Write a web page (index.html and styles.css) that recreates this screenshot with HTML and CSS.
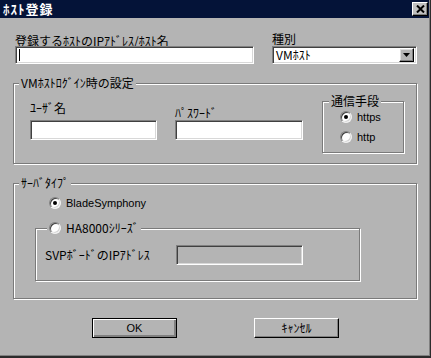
FILE: index.html
```html
<!DOCTYPE html>
<html lang="ja">
<head>
<meta charset="utf-8">
<title>ﾎｽﾄ登録</title>
<link rel="stylesheet" href="styles.css">
</head>
<body>
<div class="window">
  <div class="titlebar">
    <span class="title">ﾎｽﾄ登録</span>
    <span class="close"><svg width="9" height="8" viewBox="0 0 9 8"><path d="M1 0.5L8 7.5M8 0.5L1 7.5" stroke="#000" stroke-width="2" fill="none"/></svg></span>
  </div>
  <div class="content">
    <div class="row1">
      <div class="field host">
        <div class="lbl">登録するﾎｽﾄのIPｱﾄﾞﾚｽ/ﾎｽﾄ名</div>
        <div class="input host-input"><span class="caret"></span></div>
      </div>
      <div class="field kind">
        <div class="lbl kind-lbl">種別</div>
        <div class="select">
          <span class="sel-text">VMﾎｽﾄ</span>
          <span class="sel-btn"><svg width="7" height="4" viewBox="0 0 7 4"><path d="M0 0H7L3.5 4Z" fill="#000"/></svg></span>
        </div>
      </div>
    </div>

    <fieldset class="group vm">
      <legend>VMﾎｽﾄﾛｸﾞｲﾝ時の設定</legend>
      <div class="vm-body">
        <div class="cred user">
          <div class="lbl">ﾕｰｻﾞ名</div>
          <div class="input cred-input"></div>
        </div>
        <div class="cred pass">
          <div class="lbl">ﾊﾟｽﾜｰﾄﾞ</div>
          <div class="input cred-input"></div>
        </div>
        <fieldset class="group proto">
          <legend>通信手段</legend>
          <div class="proto-body">
            <div class="radio"><span class="dot checked"></span><span class="lat">https</span></div>
            <div class="radio"><span class="dot"></span><span class="lat">http</span></div>
          </div>
        </fieldset>
      </div>
    </fieldset>

    <fieldset class="group server">
      <legend>ｻｰﾊﾞﾀｲﾌﾟ</legend>
      <div class="radio blade"><span class="dot checked"></span><span class="lat">BladeSymphony</span></div>
      <fieldset class="group ha">
        <legend><span class="radio"><span class="dot"></span><span>HA8000ｼﾘｰｽﾞ</span></span></legend>
        <div class="svp-row">
          <span class="svp-lbl">SVPﾎﾞｰﾄﾞのIPｱﾄﾞﾚｽ</span>
          <div class="input svp-input disabled"></div>
        </div>
      </fieldset>
    </fieldset>

    <div class="buttons">
      <div class="btn ok default"><span class="lat">OK</span></div>
      <div class="btn cancel">ｷｬﾝｾﾙ</div>
    </div>
  </div>
</div>
</body>
</html>
```

FILE: styles.css
```css
* { box-sizing: border-box; }
html, body { margin: 0; padding: 0; background: #b4b4b4; }
body {
  font-family: "Noto Sans CJK JP", "Noto Sans", sans-serif;
  font-size: 12px;
  line-height: 12px;
  color: #000;
}
.lat {
  font-family: "Liberation Sans", "Noto Sans", sans-serif;
  font-size: 11px;
}
.window {
  width: 431px;
  height: 358px;
  background: #b4b4b4;
  border-right: 1px solid #2c2c2c;
  border-bottom: 2px solid #2c2c2c;
  box-shadow: inset -1px -1px 0 #808080;
  display: flex;
  flex-direction: column;
  overflow: hidden;
}
.titlebar {
  height: 18px;
  flex: none;
  margin-right: 1px;
  background: #041338;
  display: flex;
  align-items: center;
  justify-content: space-between;
  padding: 0 1px 0 3px;
}
.title {
  color: #fff;
  font-weight: bold;
  font-size: 13px;
  letter-spacing: 1px;
  line-height: 14px;
}
.close {
  width: 16px;
  height: 14px;
  background: #c0c0c0;
  border: 1px solid;
  border-color: #fff #000 #000 #fff;
  box-shadow: inset -1px -1px 0 #808080;
  display: flex;
  align-items: center;
  justify-content: center;
}
.close svg { display: block; }
.content {
  padding-top: 17px;
  display: flex;
  flex-direction: column;
}
.row1 { display: flex; align-items: flex-start; }
.field.host { margin-left: 15px; width: 239px; }
.field.kind { margin-left: 18px; width: 145px; }
.lbl { line-height: 11px; height: 11px; white-space: nowrap; }
.kind-lbl { margin-top: -2px; margin-bottom: 2px; }

.input {
  background: #fff;
  border: 1px solid;
  border-color: #808080 #fff #fff #808080;
  box-shadow: inset 1px 1px 0 #404040, inset -1px -1px 0 #d8d8d8;
}
.host-input { height: 18px; position: relative; }
.caret {
  position: absolute;
  left: 3px;
  top: 2px;
  width: 1px;
  height: 12px;
  background: #000;
}
.select {
  height: 18px;
  background: #fff;
  border: 1px solid;
  border-color: #808080 #fff #fff #808080;
  box-shadow: inset 1px 1px 0 #404040, inset -1px -1px 0 #d8d8d8;
  display: flex;
  align-items: center;
  justify-content: space-between;
  padding: 1px 2px 1px 2px;
}
.sel-text { line-height: 12px; padding-left: 1px; }
.sel-btn {
  width: 15px;
  height: 14px;
  background: #b4b4b4;
  border: 1px solid;
  border-color: #fff #000 #000 #fff;
  box-shadow: inset -1px -1px 0 #808080, inset 1px 1px 0 #dcdcdc;
  display: flex;
  align-items: center;
  justify-content: center;
}
.sel-btn svg { display: block; }

fieldset.group {
  margin: 0;
  padding: 0;
  min-width: 0;
  border: 1px solid #7a7a7a;
  box-shadow: 1px 1px 0 #fff, inset 1px 1px 0 #fff;
}
fieldset.group > legend {
  padding: 0 2px;
  line-height: 12px;
  background: #b4b4b4;
  white-space: nowrap;
}
.vm { margin-top: 13px !important; margin-left: 13px !important; width: 404px; height: 87px; }
.vm > legend { margin-left: 5px; }
.vm-body { display: flex; align-items: flex-start; }
.cred.user { margin-left: 16px; width: 127px; margin-top: 13px; }
.cred.user .cred-input { margin-top: 7px; }
.cred.pass { margin-left: 18px; width: 128px; margin-top: 18px; }
.cred.pass .cred-input { margin-top: 2px; }
.cred-input { height: 20px; }
.proto { margin-left: 19px !important; margin-top: 6px !important; width: 82px; height: 58px; }
.proto > legend { margin-left: 6px; }
.proto-body { padding-top: 3px; padding-left: 17px; display: flex; flex-direction: column; gap: 6px; }

.radio { display: flex; align-items: center; height: 14px; line-height: 14px; }
.dot {
  width: 12px;
  height: 12px;
  flex: none;
  border-radius: 50%;
  background: #fff;
  border: 1px solid;
  border-color: #808080 #f0f0f0 #f0f0f0 #808080;
  box-shadow: inset 1px 1px 0 #404040, inset -1px -1px 0 #d4d4d4;
  margin-right: 5px;
  position: relative;
}
.dot.checked::after {
  content: "";
  position: absolute;
  left: 3px;
  top: 3px;
  width: 4px;
  height: 4px;
  border-radius: 50%;
  background: #000;
}

.server { margin-top: 13px !important; margin-left: 13px !important; width: 404px; height: 122px; }
.server > legend { margin-left: 5px; }
.blade { margin-top: 7px; margin-left: 35px; }
.ha { margin-top: 11px !important; margin-left: 21px !important; width: 325px; height: 60px; }
.ha > legend { margin-left: 11px; line-height: 14px !important; }
.svp-row { display: flex; align-items: center; margin-top: 10px; }
.svp-lbl { margin-left: 9px; width: 131px; white-space: nowrap; }
.svp-input { width: 127px; height: 20px; }
.input.disabled { background: #b4b4b4; }

.buttons { display: flex; margin-top: 19px; }
.btn {
  width: 85px;
  height: 20px;
  display: flex;
  align-items: center;
  justify-content: center;
  background: #b4b4b4;
  border: 1px solid;
  border-color: #fff #000 #000 #fff;
  box-shadow: inset -1px -1px 0 #808080;
}
.btn.default {
  border-color: #000;
  box-shadow: inset 1px 1px 0 #fff, inset -2px -2px 0 #808080;
}
.btn.ok { margin-left: 92px; }
.btn.cancel { margin-left: 77px; }
```
